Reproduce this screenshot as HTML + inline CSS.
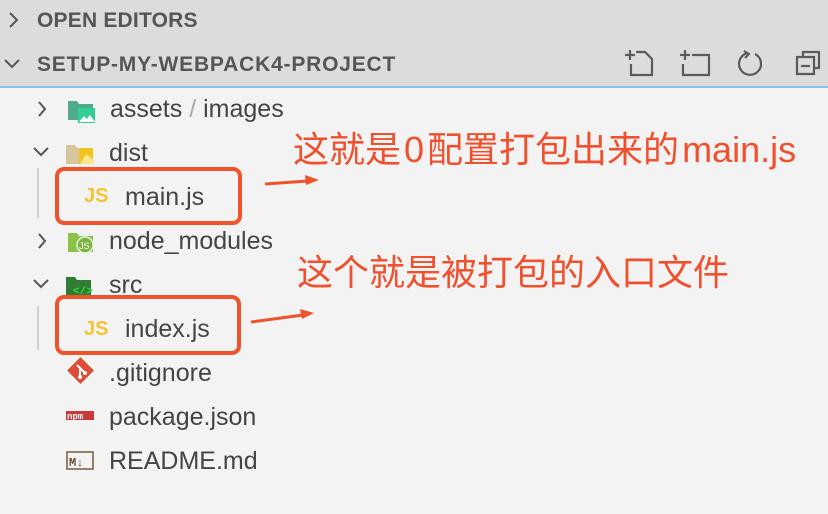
<!DOCTYPE html>
<html><head><meta charset="utf-8"><style>
body{margin:0;width:828px;height:514px;background:#f3f3f3;position:relative;overflow:hidden;font-family:"Liberation Sans","Noto Sans CJK SC",sans-serif;}
.hdr{position:absolute;left:0;top:0;width:828px;height:86px;background:#dcdcdc;border-bottom:2px solid #8ec3e6;}
.h{position:absolute;font-weight:bold;font-size:21px;color:#555;letter-spacing:0.2px}
.t{position:absolute;font-size:25px;color:#444;line-height:30px}
.ann{position:absolute;font-size:36px;color:#f1502d;line-height:40px;white-space:nowrap}
.box{position:absolute;border:4px solid #f0522a;border-radius:9px;box-sizing:border-box}
.js{position:absolute;font-weight:bold;font-size:20px;color:#f5c434}
svg{position:absolute}
</style></head><body>
<div class="hdr"></div>
<svg style="left:0;top:0" width="828" height="514">
<g fill="none" stroke="#555" stroke-width="2">
<path d="M10 13l7 7-7 7"/><path d="M5 60l7 7 7-7"/>
<path d="M39 102l6 7-6 7"/><path d="M34 148l7 7 7-7"/><path d="M39 234l6 7-6 7"/><path d="M34 280l7 7 7-7"/>
</g>
<g fill="none" stroke="#5a5a5a" stroke-width="2.2">
<path d="M625 55h10M630 50v10M636 52h9l7 7v16h-21v-11"/>
<path d="M680 55h10M685 50v10M692 55h17v20h-26v-11"/>
<path d="M748 53a11 11 0 1 0 7 1"/>
<path d="M797 57h17v17h-17zM803 57v-5h16v16h-5M801 66h9"/>
</g>
<path d="M744 51l5 3-4 4" fill="none" stroke="#5a5a5a" stroke-width="2"/>
<rect x="37" y="168" width="2" height="50" fill="#d0d0d0"/>
<rect x="37" y="306" width="2" height="44" fill="#d0d0d0"/>
<path d="M68 101h9l2 3h14v16h-25z" fill="#4daa8a"/><rect x="78" y="108" width="17" height="15" fill="#2fcf96"/><path d="M79 122l5-6 3 3 3-4 5 7z" fill="#fff"/>
<path d="M66 145h9l2 3h14v16h-25z" fill="#d6c69b"/><path d="M79 148h14v16h-14z" fill="#f4c21c"/><path d="M80 164l6-10 8 6v4z" fill="#fbe68c"/>
<path d="M68 233h9l2 3h14v16h-25z" fill="#8bc34a"/><circle cx="85" cy="245" r="8" fill="#7cb342" stroke="#e8f5d8" stroke-width="1.5"/><text x="79" y="249" font-size="9" fill="#fff" font-family="Liberation Sans">JS</text>
<path d="M66 277h9l2 3h14v16h-25z" fill="#2e7d32"/><text x="73" y="294" font-size="11" fill="#35d84a" font-family="Liberation Mono" font-weight="bold">&lt;/&gt;</text>
<rect x="71" y="361" width="19" height="19" transform="rotate(45 80.5 370.5)" fill="#dd4c35"/><path d="M77 365l8 8M80 368v9" stroke="#fff" stroke-width="2"/><circle cx="80" cy="377" r="2" fill="#fff"/><circle cx="85" cy="373" r="2" fill="#fff"/>
<rect x="66" y="411" width="28" height="9" fill="#cb3837"/><text x="67" y="419" font-size="9" fill="#fff" font-weight="bold" font-family="Liberation Mono">npm</text>
<rect x="67" y="452" width="26" height="17" fill="none" stroke="#7a5a3a" stroke-width="1.5"/><text x="69" y="466" font-size="12" font-weight="bold" fill="#6b4d2e" font-family="Liberation Mono">M↓</text>
<path d="M265 184L308 181" stroke="#f0522a" stroke-width="3"/><path d="M305 175l14 5-13 5z" fill="#f0522a"/>
<path d="M251 322L303 315" stroke="#f0522a" stroke-width="3"/><path d="M300 309l14 4-12 6z" fill="#f0522a"/>
</svg>
<div class="h" style="left:37px;top:9px">OPEN EDITORS</div>
<div class="h" style="left:37px;top:53px;letter-spacing:0.8px">SETUP-MY-WEBPACK4-PROJECT</div>
<div class="t" style="left:110px;top:94px">assets <span style="color:#aaa">/</span> images</div>
<div class="t" style="left:109px;top:138px">dist</div>
<div class="js" style="left:84px;top:185px">JS</div>
<div class="t" style="left:125px;top:182px">main.js</div>
<div class="t" style="left:109px;top:226px">node_modules</div>
<div class="t" style="left:109px;top:270px">src</div>
<div class="js" style="left:84px;top:318px">JS</div>
<div class="t" style="left:125px;top:314px">index.js</div>
<div class="t" style="left:109px;top:358px">.gitignore</div>
<div class="t" style="left:109px;top:402px">package.json</div>
<div class="t" style="left:109px;top:446px">README.md</div>
<div class="box" style="left:55px;top:167px;width:187px;height:58px"></div>
<div class="box" style="left:55px;top:295px;width:186px;height:60px"></div>
<div class="ann" style="left:293px;top:130px">这就是<span style="padding:0 3px">0</span>配置打包出来的<span style="padding-left:3px">main.js</span></div>
<div class="ann" style="left:297px;top:253px">这个就是被打包的入口文件</div>
</body></html>
